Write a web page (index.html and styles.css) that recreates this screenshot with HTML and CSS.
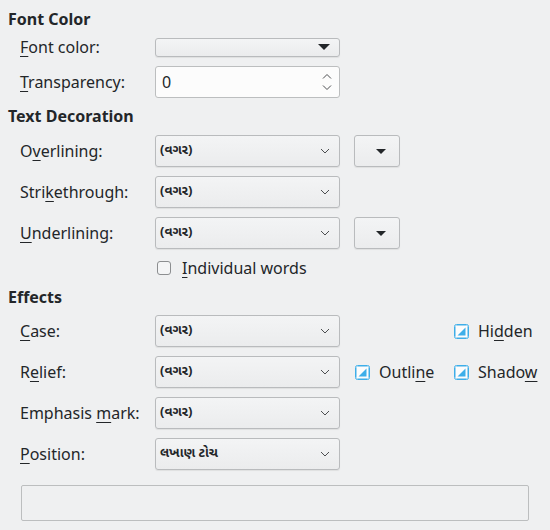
FILE: index.html
```html
<!DOCTYPE html>
<html>
<head>
<meta charset="utf-8">
<link rel="stylesheet" href="styles.css">
</head>
<body>
<div class="page">
  <div class="heading">Font Color</div>
  <div class="grid fc">
    <div class="label"><u>F</u>ont color:</div>
    <div class="colorbtn wide"><span class="tri"></span></div>
    <div></div>
    <div class="label"><u>T</u>ransparency:</div>
    <div class="spin"><span class="val">0</span>
      <svg class="spinarrows" width="10" height="20" viewBox="0 0 10 20"><path d="M1 6.5 L5 2.5 L9 6.5 M1 13.5 L5 17.5 L9 13.5" fill="none" stroke="#4d4f51" stroke-width="1"/></svg>
    </div>
    <div></div>
  </div>

  <div class="heading h2">Text Decoration</div>
  <div class="grid td">
    <div class="label">O<u>v</u>erlining:</div>
    <div class="combo"><span class="guj">(વગર)</span><svg class="chev" width="10" height="6" viewBox="0 0 10 6"><path d="M1 1 L5 5 L9 1" fill="none" stroke="#4d4f51" stroke-width="1"/></svg></div>
    <div class="extra"><div class="colorbtn small"><span class="tri"></span></div></div>

    <div class="label">Stri<u>k</u>ethrough:</div>
    <div class="combo"><span class="guj">(વગર)</span><svg class="chev" width="10" height="6" viewBox="0 0 10 6"><path d="M1 1 L5 5 L9 1" fill="none" stroke="#4d4f51" stroke-width="1"/></svg></div>
    <div></div>

    <div class="label"><u>U</u>nderlining:</div>
    <div class="combo"><span class="guj">(વગર)</span><svg class="chev" width="10" height="6" viewBox="0 0 10 6"><path d="M1 1 L5 5 L9 1" fill="none" stroke="#4d4f51" stroke-width="1"/></svg></div>
    <div class="extra"><div class="colorbtn small"><span class="tri"></span></div></div>
  </div>
  <div class="words">
    <span class="cb off"></span><span class="cbtext"><u>I</u>ndividual words</span>
  </div>

  <div class="heading h3">Effects</div>
  <div class="grid ef">
    <div class="label"><u>C</u>ase:</div>
    <div class="combo"><span class="guj">(વગર)</span><svg class="chev" width="10" height="6" viewBox="0 0 10 6"><path d="M1 1 L5 5 L9 1" fill="none" stroke="#4d4f51" stroke-width="1"/></svg></div>
    <div class="checks">
      <div class="slot"></div>
      <div class="slot"><svg class="cb" width="15" height="15" viewBox="0 0 15 15"><rect x="0.5" y="0.5" width="14" height="14" rx="2" fill="#fcfcfc" stroke="#3daee9"/><rect x="1.5" y="1.5" width="12" height="12" rx="1" fill="none" stroke="#9fd4f1"/><path d="M11.5 3.5 L11.5 11.5 L3.5 11.5 Z" fill="#3daee9"/></svg><span class="cbtext">Hi<u>d</u>den</span></div>
    </div>

    <div class="label">R<u>e</u>lief:</div>
    <div class="combo"><span class="guj">(વગર)</span><svg class="chev" width="10" height="6" viewBox="0 0 10 6"><path d="M1 1 L5 5 L9 1" fill="none" stroke="#4d4f51" stroke-width="1"/></svg></div>
    <div class="checks">
      <div class="slot"><svg class="cb" width="15" height="15" viewBox="0 0 15 15"><rect x="0.5" y="0.5" width="14" height="14" rx="2" fill="#fcfcfc" stroke="#3daee9"/><rect x="1.5" y="1.5" width="12" height="12" rx="1" fill="none" stroke="#9fd4f1"/><path d="M11.5 3.5 L11.5 11.5 L3.5 11.5 Z" fill="#3daee9"/></svg><span class="cbtext">Outli<u>n</u>e</span></div>
      <div class="slot"><svg class="cb" width="15" height="15" viewBox="0 0 15 15"><rect x="0.5" y="0.5" width="14" height="14" rx="2" fill="#fcfcfc" stroke="#3daee9"/><rect x="1.5" y="1.5" width="12" height="12" rx="1" fill="none" stroke="#9fd4f1"/><path d="M11.5 3.5 L11.5 11.5 L3.5 11.5 Z" fill="#3daee9"/></svg><span class="cbtext">Shado<u>w</u></span></div>
    </div>

    <div class="label">Emphasis <u>m</u>ark:</div>
    <div class="combo"><span class="guj">(વગર)</span><svg class="chev" width="10" height="6" viewBox="0 0 10 6"><path d="M1 1 L5 5 L9 1" fill="none" stroke="#4d4f51" stroke-width="1"/></svg></div>
    <div></div>

    <div class="label"><u>P</u>osition:</div>
    <div class="combo"><span class="guj">લખાણ ટોચ</span><svg class="chev" width="10" height="6" viewBox="0 0 10 6"><path d="M1 1 L5 5 L9 1" fill="none" stroke="#4d4f51" stroke-width="1"/></svg></div>
    <div></div>
  </div>
  <div class="preview"></div>
</div>
</body>
</html>
```
FILE: styles.css
```css
html, body {
  margin: 0;
  padding: 0;
  background: #eff0f1;
}
body {
  width: 550px;
  height: 530px;
  overflow: hidden;
  font-family: "Noto Sans", "Noto Sans Gujarati", "Lohit Gujarati", "DejaVu Sans", sans-serif;
  font-size: 16px;
  line-height: 20px;
  color: #232629;
}
.page {
  padding: 9px 0 0 8px;
}
.heading {
  font-weight: bold;
  height: 20px;
  line-height: 20px;
}
.h2 { margin-top: 8px; }
.h3 { margin-top: 9px; }
u {
  text-decoration: underline;
  text-underline-offset: 3px;
  text-decoration-thickness: 1px;
}
.grid {
  display: grid;
  grid-template-columns: 135px 185px 1fr;
  margin-left: 12px;
  row-gap: 9px;
  align-items: center;
}
.fc { margin-top: 8px; }
.fc .colorbtn.wide { height: 19px; }
.td { margin-top: 9px; }
.ef { margin-top: 8px; }
.label {
  line-height: 20px;
  white-space: nowrap;
}
.colorbtn {
  box-sizing: border-box;
  border: 1px solid #b9bbbd;
  border-radius: 3px;
  background: linear-gradient(#f3f4f5, #ebeced);
  box-shadow: 0 1px 1px rgba(0,0,0,0.07);
  display: flex;
  align-items: center;
  justify-content: flex-end;
}
.colorbtn.wide { padding-right: 9px; }
.colorbtn.small {
  width: 46px;
  height: 32px;
  padding-right: 13px;
}
.tri {
  width: 0;
  height: 0;
  border-left: 6px solid transparent;
  border-right: 6px solid transparent;
  border-top: 6px solid #232629;
}
.colorbtn.small .tri {
  border-left-width: 5px;
  border-right-width: 5px;
  border-top-width: 5px;
}
.spin {
  box-sizing: border-box;
  height: 32px;
  border: 1px solid #bcbebf;
  border-radius: 3px;
  background: #fcfcfc;
  display: flex;
  align-items: center;
  justify-content: space-between;
  padding: 0 7px 0 6px;
}
.extra {
  padding-left: 14px;
  display: flex;
}
.combo {
  box-sizing: border-box;
  height: 32px;
  border: 1px solid #b9bbbd;
  border-radius: 3px;
  background: linear-gradient(#f3f4f5, #ebeced);
  box-shadow: 0 1px 1px rgba(0,0,0,0.07);
  display: flex;
  align-items: center;
  justify-content: space-between;
  padding: 0 9px 0 4px;
}
.guj {
  font-size: 13px;
  font-weight: bold;
  font-family: "Noto Sans Gujarati", "Lohit Gujarati", "Noto Sans", sans-serif;
}
.words {
  display: flex;
  align-items: center;
  height: 20px;
  margin: 9px 0 0 149px;
}
.cb.off {
  box-sizing: border-box;
  width: 14px;
  height: 14px;
  border: 1px solid #8c8e90;
  border-radius: 3px;
  background: #f4f5f6;
}
.words .cbtext { margin-left: 11px; }
.checks {
  display: flex;
  padding-left: 15px;
}
.slot {
  width: 99px;
  display: flex;
  align-items: center;
  white-space: nowrap;
}
.slot .cbtext { margin-left: 9px; }
.slot .cb { flex: none; }
.preview {
  box-sizing: border-box;
  margin: 15px 0 0 13px;
  width: 508px;
  height: 36px;
  border: 1px solid #bcbebf;
  border-radius: 2px;
}
```
